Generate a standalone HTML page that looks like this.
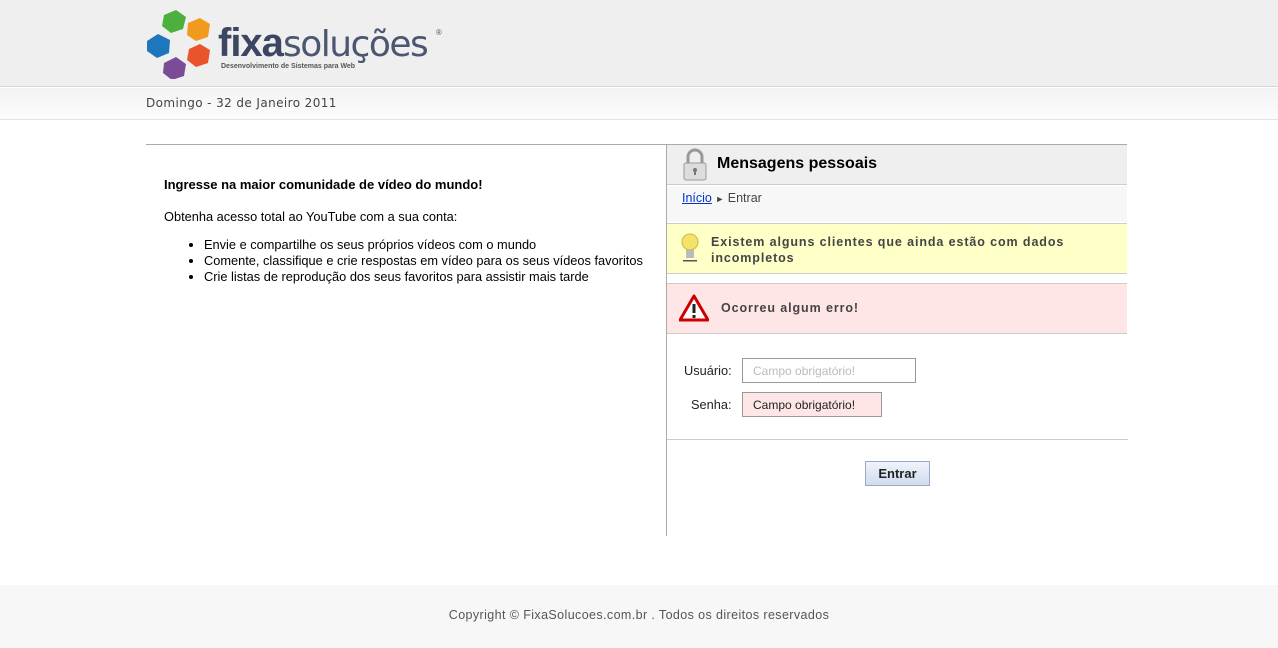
<!DOCTYPE html>
<html><head><meta charset="utf-8"><style>
*{margin:0;padding:0;box-sizing:border-box}
body{width:1278px;height:648px;background:#fff;font-family:"Liberation Sans",Arial,sans-serif;position:relative;overflow:hidden;color:#000}
.abs{position:absolute}
#hdr{left:0;top:0;width:1278px;height:87px;background:#efefef;border-bottom:1px solid #d4d4d4}
#date{left:0;top:88px;width:1278px;height:32px;background:linear-gradient(#f3f3f3,#fcfcfc);border-bottom:1px solid #e4e4e4;font-family:"DejaVu Sans",sans-serif;font-size:12px;letter-spacing:.4px;color:#444;padding:8px 0 0 146px}
#foot{left:0;top:585px;width:1278px;height:63px;background:#f7f7f7;text-align:center;font-size:12.5px;letter-spacing:.4px;color:#555;padding-top:23px}
.t{font-size:12.8px;color:#000}
</style></head><body>
<div id="hdr" class="abs">
<svg class="abs" style="left:146px;top:9px" width="68" height="70" viewBox="0 0 68 70">
<polygon points="18,6 30,1 40,8 37,20 25,24 16,17" fill="#4caf3e"/>
<polygon points="42,14 54,9 64,15 62,28 50,32 41,26" fill="#f29a1e"/>
<polygon points="1,32 12,25 24,31 23,44 11,49 1,42" fill="#1e76bd"/>
<polygon points="43,40 54,35 64,41 62,54 50,58 41,51" fill="#e9552a"/>
<polygon points="18,54 30,48 40,55 38,67 26,71 17,64" fill="#7a4b96"/>
</svg>
<div class="abs" style="left:218px;top:20px;font-size:40px;letter-spacing:-1px;color:#3b4660;line-height:46px"><b>fixa</b><span style="font-family:'DejaVu Sans',sans-serif;font-size:36px;letter-spacing:-1.5px;color:#4b5670">soluções</span></div>
<div class="abs" style="left:436px;top:28px;font-size:8px;color:#555">®</div>
<div class="abs" style="left:221px;top:63px;font-size:7px;font-weight:bold;color:#555">Desenvolvimento de Sistemas para Web</div>
</div>
<div id="date" class="abs">Domingo - 32 de Janeiro 2011</div>

<div class="abs" style="left:146px;top:144px;width:981px;border-top:1px solid #aaa"></div>
<div class="abs" style="left:666px;top:144px;height:392px;border-left:1px solid #aaa"></div>

<div class="abs t" style="left:164px;top:177px;font-weight:bold;font-size:13px">Ingresse na maior comunidade de vídeo do mundo!</div>
<div class="abs t" style="left:164px;top:209px">Obtenha acesso total ao YouTube com a sua conta:</div>
<ul class="abs t" style="left:204px;top:237px;line-height:16px">
<li>Envie e compartilhe os seus próprios vídeos com o mundo</li>
<li>Comente, classifique e crie respostas em vídeo para os seus vídeos favoritos</li>
<li>Crie listas de reprodução dos seus favoritos para assistir mais tarde</li>
</ul>

<div class="abs" style="left:667px;top:145px;width:460px;height:40px;background:#efefef;border-bottom:1px solid #ccc"></div>
<svg class="abs" style="left:681px;top:148px" width="28" height="34" viewBox="0 0 28 34">
<path d="M7 15V9a7 7 0 0 1 14 0v6" fill="none" stroke="#999" stroke-width="3"/>
<rect x="3" y="15" width="22" height="17" rx="2" fill="#ddd" stroke="#999"/>
<circle cx="14" cy="22" r="2" fill="#777"/><rect x="13" y="22" width="2" height="5" fill="#777"/>
</svg>
<div class="abs" style="left:717px;top:155px;font-size:16px;font-weight:bold">Mensagens pessoais</div>
<div class="abs" style="left:667px;top:186px;width:460px;height:36px;background:#f7f7f7"></div>
<div class="abs t" style="left:682px;top:191px;font-size:12.5px;color:#444"><span style="color:#0033cc;text-decoration:underline">Início</span> <span style="font-size:9px">►</span> Entrar</div>

<div class="abs" style="left:667px;top:223px;width:460px;height:51px;background:#ffffc8;border-top:1px solid #ccc;border-bottom:1px solid #ccc"></div>
<svg class="abs" style="left:680px;top:233px" width="20" height="30" viewBox="0 0 20 30"><circle cx="10" cy="9" r="8" fill="#f5e26a" stroke="#c9b840"/><rect x="6" y="17" width="8" height="8" fill="#bbb"/><rect x="3" y="27" width="14" height="1.5" fill="#555"/></svg>
<div class="abs" style="left:711px;top:234px;font-size:12.5px;font-weight:bold;color:#444;letter-spacing:.9px;line-height:16px">Existem alguns clientes que ainda estão com dados<br>incompletos</div>

<div class="abs" style="left:667px;top:283px;width:460px;height:51px;background:#ffe6e6;border-top:1px solid #ccc;border-bottom:1px solid #ccc"></div>
<svg class="abs" style="left:679px;top:294px" width="30" height="28" viewBox="0 0 30 28"><polygon points="15,2 29,26 1,26" fill="#fff" stroke="#c00" stroke-width="3" stroke-linejoin="round"/><rect x="13.5" y="10" width="3" height="9" fill="#222"/><rect x="13.5" y="21" width="3" height="3" fill="#222"/></svg>
<div class="abs" style="left:721px;top:301px;font-size:12.5px;font-weight:bold;color:#444;letter-spacing:.9px">Ocorreu algum erro!</div>

<div class="abs t" style="left:684px;top:363px;color:#222">Usuário:</div>
<div class="abs" style="left:742px;top:358px;width:174px;height:25px;border:1px solid #999;font-size:12px;color:#bbb;padding:5px 0 0 10px">Campo obrigatório!</div>
<div class="abs t" style="left:691px;top:397px;color:#222">Senha:</div>
<div class="abs" style="left:742px;top:392px;width:140px;height:25px;border:1px solid #999;background:#ffe6e6;font-size:12px;color:#222;padding:5px 0 0 10px">Campo obrigatório!</div>
<div class="abs" style="left:667px;top:439px;width:461px;border-top:1px solid #ccc"></div>
<div class="abs" style="left:865px;top:461px;width:65px;height:25px;border:1px solid #99aac8;background:linear-gradient(#f0f4fb,#cfdbee);font-size:13px;font-weight:bold;color:#222;text-align:center;padding-top:4px">Entrar</div>

<div id="foot" class="abs">Copyright © FixaSolucoes.com.br . Todos os direitos reservados</div>
</body></html>
